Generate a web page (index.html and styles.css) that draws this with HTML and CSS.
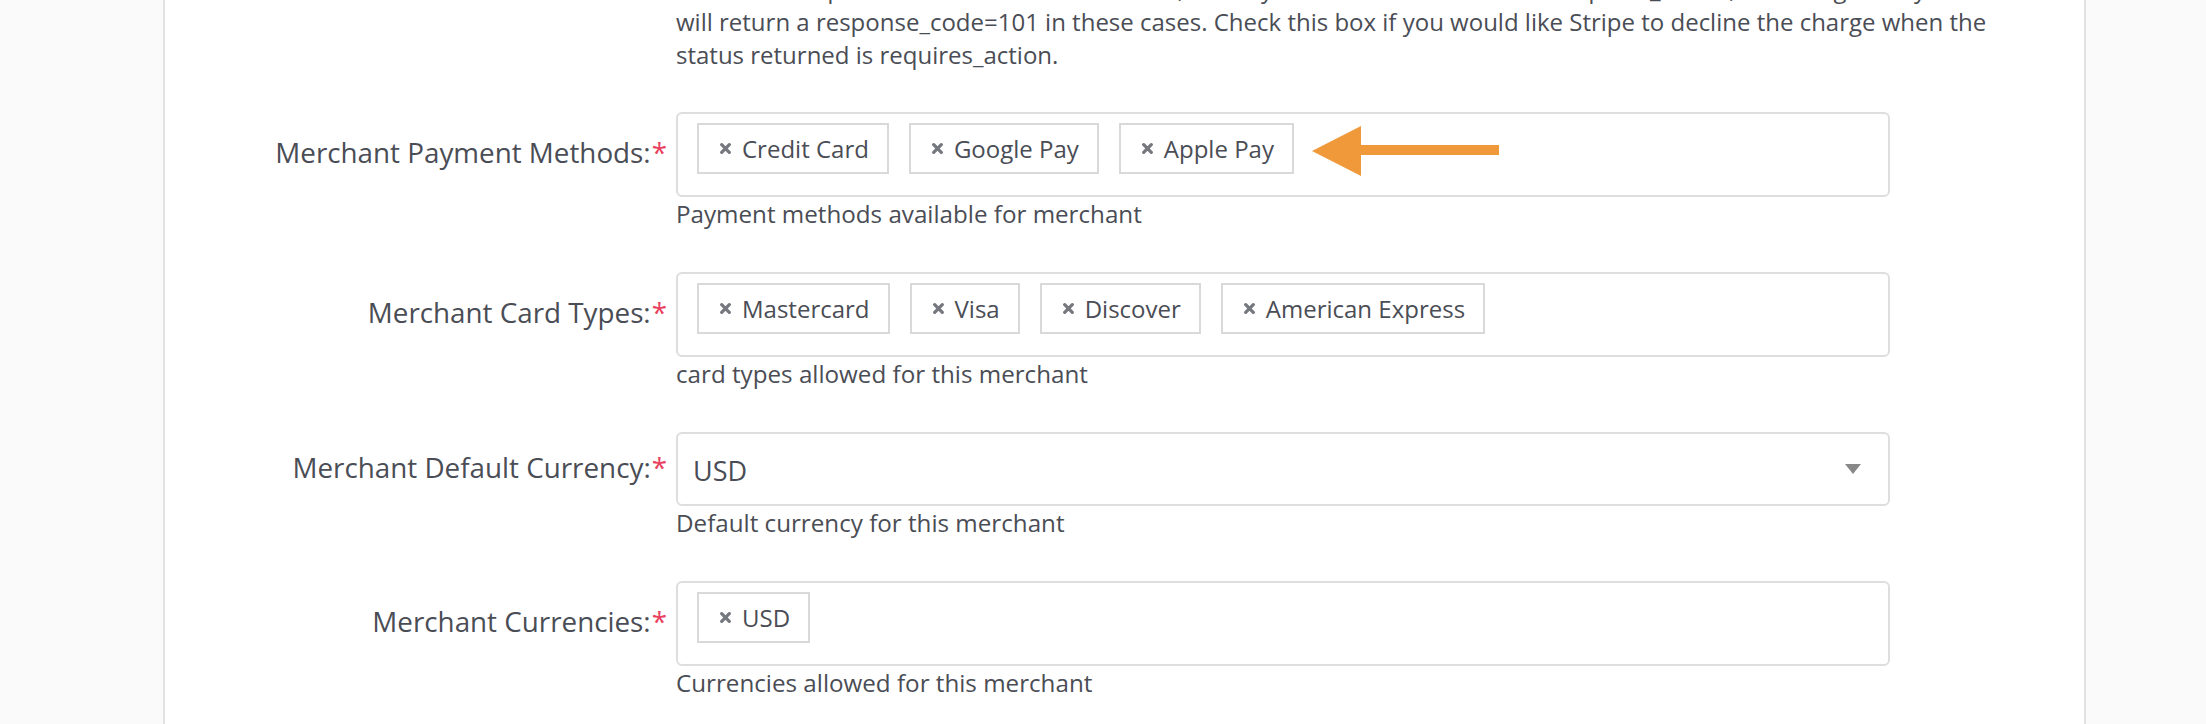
FILE: index.html
```html
<!DOCTYPE html>
<html lang="en">
<head>
<meta charset="utf-8">
<title>Merchant settings</title>
<link rel="stylesheet" href="styles.css">
</head>
<body>
<div class="page">
  <aside class="side side-left"></aside>
  <main class="main">
    <div class="form">
      <div class="row row-desc">
        <p class="desc">If the card requires 3D Secure authentication, the PaymentIntent status will be requires_action, and the gateway<br>will return a response_code=101 in these cases. Check this box if you would like Stripe to decline the charge when the<br>status returned is requires_action.</p>
      </div>

      <div class="row">
        <label class="label">Merchant Payment Methods:<span class="req">*</span></label>
        <div class="multi">
          <span class="tag"><svg class="x" viewBox="0 0 12 10"><path d="M2.5 1.5L9.5 8.5M9.5 1.5L2.5 8.5"/></svg>Credit Card</span>
          <span class="tag"><svg class="x" viewBox="0 0 12 10"><path d="M2.5 1.5L9.5 8.5M9.5 1.5L2.5 8.5"/></svg>Google Pay</span>
          <span class="tag"><svg class="x" viewBox="0 0 12 10"><path d="M2.5 1.5L9.5 8.5M9.5 1.5L2.5 8.5"/></svg>Apple Pay</span>
          <svg class="arrow" viewBox="0 0 188 50"><polygon points="0,25 49,0 49,19 187,19 187,29 49,29 49,50"/></svg>
        </div>
        <div class="help">Payment methods available for merchant</div>
      </div>

      <div class="row">
        <label class="label">Merchant Card Types:<span class="req">*</span></label>
        <div class="multi">
          <span class="tag"><svg class="x" viewBox="0 0 12 10"><path d="M2.5 1.5L9.5 8.5M9.5 1.5L2.5 8.5"/></svg>Mastercard</span>
          <span class="tag"><svg class="x" viewBox="0 0 12 10"><path d="M2.5 1.5L9.5 8.5M9.5 1.5L2.5 8.5"/></svg>Visa</span>
          <span class="tag"><svg class="x" viewBox="0 0 12 10"><path d="M2.5 1.5L9.5 8.5M9.5 1.5L2.5 8.5"/></svg>Discover</span>
          <span class="tag"><svg class="x" viewBox="0 0 12 10"><path d="M2.5 1.5L9.5 8.5M9.5 1.5L2.5 8.5"/></svg>American Express</span>
        </div>
        <div class="help">card types allowed for this merchant</div>
      </div>

      <div class="row">
        <label class="label">Merchant Default Currency:<span class="req">*</span></label>
        <div class="select">
          <span class="select-value">USD</span>
          <svg class="caret" viewBox="0 0 16 10"><polygon points="0,0 16,0 8,10"/></svg>
        </div>
        <div class="help">Default currency for this merchant</div>
      </div>

      <div class="row">
        <label class="label">Merchant Currencies:<span class="req">*</span></label>
        <div class="multi">
          <span class="tag"><svg class="x" viewBox="0 0 12 10"><path d="M2.5 1.5L9.5 8.5M9.5 1.5L2.5 8.5"/></svg>USD</span>
        </div>
        <div class="help">Currencies allowed for this merchant</div>
      </div>
    </div>
  </main>
  <aside class="side side-right"></aside>
</div>
</body>
</html>
```

FILE: styles.css
```css
* { box-sizing: border-box; }
html, body { margin: 0; padding: 0; }
body {
  width: 2206px;
  height: 724px;
  overflow: hidden;
  background: #ffffff;
  font-family: "Open Sans", "Noto Sans", sans-serif;
  color: #4a4d55;
}
.page {
  display: flex;
  height: 724px;
}
.side {
  background: #fafafa;
  flex: none;
}
.side-left {
  width: 165px;
  border-right: 2px solid #e2e2e2;
}
.side-right {
  width: 122px;
  border-left: 2px solid #e2e2e2;
}
.main {
  flex: 1;
  overflow: hidden;
}
.form {
  margin-top: -28px;
  display: flex;
  flex-direction: column;
}
.row {
  display: grid;
  grid-template-columns: 502px 1214px;
  column-gap: 9px;
  align-items: center;
  margin-bottom: 42px;
}
.row-desc { margin-bottom: 41px; }
.desc {
  grid-column: 2;
  margin: 0;
  font-size: 24px;
  line-height: 33px;
  white-space: nowrap;
}
.label {
  grid-row: 1;
  grid-column: 1;
  text-align: right;
  font-size: 27.8px;
  line-height: 36px;
  padding-bottom: 5px;
  white-space: nowrap;
}
.req {
  color: #e8405e;
  margin-left: 1px;
}
.multi {
  grid-row: 1;
  grid-column: 2;
  position: relative;
  height: 85px;
  border: 2px solid #dedede;
  border-radius: 6px;
  padding: 9px 18px 0 19px;
  display: flex;
  align-items: flex-start;
  gap: 20px;
}
.tag {
  height: 51px;
  border: 2px solid #d9d9d9;
  padding: 0 18px 0 20px;
  display: flex;
  align-items: center;
  gap: 10px;
  font-size: 24px;
  white-space: nowrap;
}
.x {
  width: 13px;
  height: 11px;
  fill: none;
  stroke: #75787f;
  stroke-width: 3;
  stroke-linecap: round;
}
.arrow {
  position: absolute;
  left: 634px;
  top: 12px;
  width: 188px;
  height: 50px;
  fill: #f0993a;
}
.select {
  grid-row: 1;
  grid-column: 2;
  height: 74px;
  border: 2px solid #dedede;
  border-radius: 6px;
  padding: 3px 27px 0 15px;
  display: flex;
  align-items: center;
  justify-content: space-between;
}
.select-value {
  font-size: 27px;
}
.caret {
  width: 16px;
  height: 10px;
  margin-top: -3px;
  fill: #888888;
}
.help {
  grid-row: 2;
  grid-column: 2;
  font-size: 24.2px;
  line-height: 33px;
  white-space: nowrap;
}
```
